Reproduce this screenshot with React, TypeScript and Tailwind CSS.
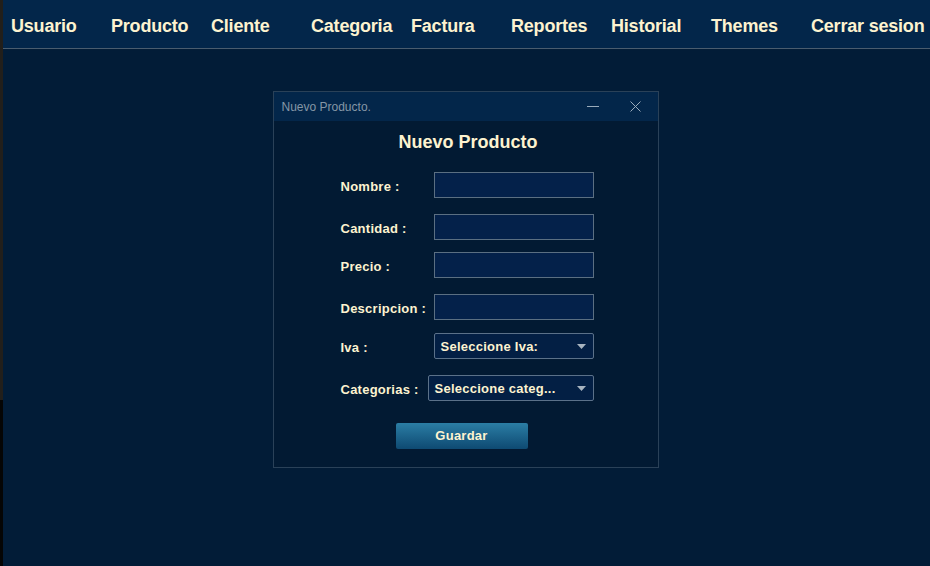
import React from "react";

const menu = ["Usuario", "Producto", "Cliente", "Categoria", "Factura", "Reportes", "Historial", "Themes", "Cerrar sesion"];

function Field({ label, children, mt }: { label: string; children: React.ReactNode; mt: string }) {
  return (
    <div className={`flex items-center h-[26px] ${mt}`}>
      <span className="w-[94px] text-[13px] font-bold text-[#fdf3d0] leading-none pl-[1px] pt-[2px] tracking-[0.25px]">{label}</span>
      {children}
    </div>
  );
}

function Input() {
  return <div className="h-[26px] w-[160px] bg-[#04214a] border border-[#5b6f82]" />;
}

function Select({ text, w }: { text: string; w: string }) {
  return (
    <div className={`h-[26px] ${w} bg-[#031f44] border border-[#5b7189] rounded-[2px] flex items-center justify-between pl-[6px] pr-[7px]`}>
      <span className="text-[13px] font-bold text-[#fdf3d0] leading-none tracking-[0.25px]">{text}</span>
      <svg width="9" height="5" viewBox="0 0 9 5"><path d="M0 0 L9 0 L4.5 5 Z" fill="#a8b4c0" /></svg>
    </div>
  );
}

export default function App() {
  return (
    <div className="w-[930px] h-[566px] flex overflow-hidden" style={{ fontFamily: '"Liberation Sans", Arial, sans-serif' }}>
      <div className="w-[3px] h-full flex flex-col">
        <div className="h-[400px] bg-[#221f1b]" />
        <div className="flex-1 bg-[#050505]" />
      </div>
      <div className="flex-1 flex flex-col bg-[#021c37]">
        <div className="h-[49px] bg-[#03264a] border-b border-[#4a5c6e] flex items-center pl-[8px] pt-[3px]">
          {menu.map((m) => (
            <div key={m} className="w-[100px] shrink-0 text-[18px] font-bold text-[#fdf3d0] leading-none whitespace-nowrap tracking-[-0.2px]">
              {m}
            </div>
          ))}
        </div>
        <div className="flex-1 flex justify-center pt-[42px] pr-[2px]">
          <div className="w-[386px] h-[377px] border border-[#2a4158] bg-[#021a33] flex flex-col">
            <div className="h-[29px] bg-[#03264a] flex items-center pl-[8px]">
              <span className="text-[12px] text-[#8596a6] flex-1">Nuevo Producto.</span>
              <svg width="12" height="2" viewBox="0 0 12 2" className="mr-[31px]"><rect width="12" height="1" fill="#9aabbb" /></svg>
              <svg width="11" height="11" viewBox="0 0 11 11" className="mr-[17px]"><path d="M0.5 0.5 L10.5 10.5 M10.5 0.5 L0.5 10.5" stroke="#9aabbb" strokeWidth="1" /></svg>
            </div>
            <div className="text-center text-[18px] font-bold text-[#fdf3d0] mt-[12px] leading-none pl-[5px]">Nuevo Producto</div>
            <div className="flex flex-col pl-[66px] mt-[21px]">
              <Field label="Nombre :" mt="mt-0"><Input /></Field>
              <Field label="Cantidad :" mt="mt-[16px]"><Input /></Field>
              <Field label="Precio :" mt="mt-[12px]"><Input /></Field>
              <Field label="Descripcion :" mt="mt-[16px]"><Input /></Field>
              <Field label="Iva :" mt="mt-[13px]"><Select text="Seleccione Iva:" w="w-[160px]" /></Field>
              <div className="flex items-center h-[26px] mt-[16px]">
                <span className="w-[88px] text-[13px] font-bold text-[#fdf3d0] leading-none pl-[1px] pt-[2px] tracking-[0.25px]">Categorias :</span>
                <Select text="Seleccione categ..." w="w-[166px]" />
              </div>
            </div>
            <div className="flex justify-center mt-[22px] pr-[8px]">
              <div className="w-[132px] h-[26px] rounded-[2px] bg-gradient-to-b from-[#2b7ea5] to-[#0e4a72] flex items-center justify-center text-[13px] font-bold text-[#fdf3d0] tracking-[0.25px]">
                Guardar
              </div>
            </div>
          </div>
        </div>
      </div>
    </div>
  );
}
